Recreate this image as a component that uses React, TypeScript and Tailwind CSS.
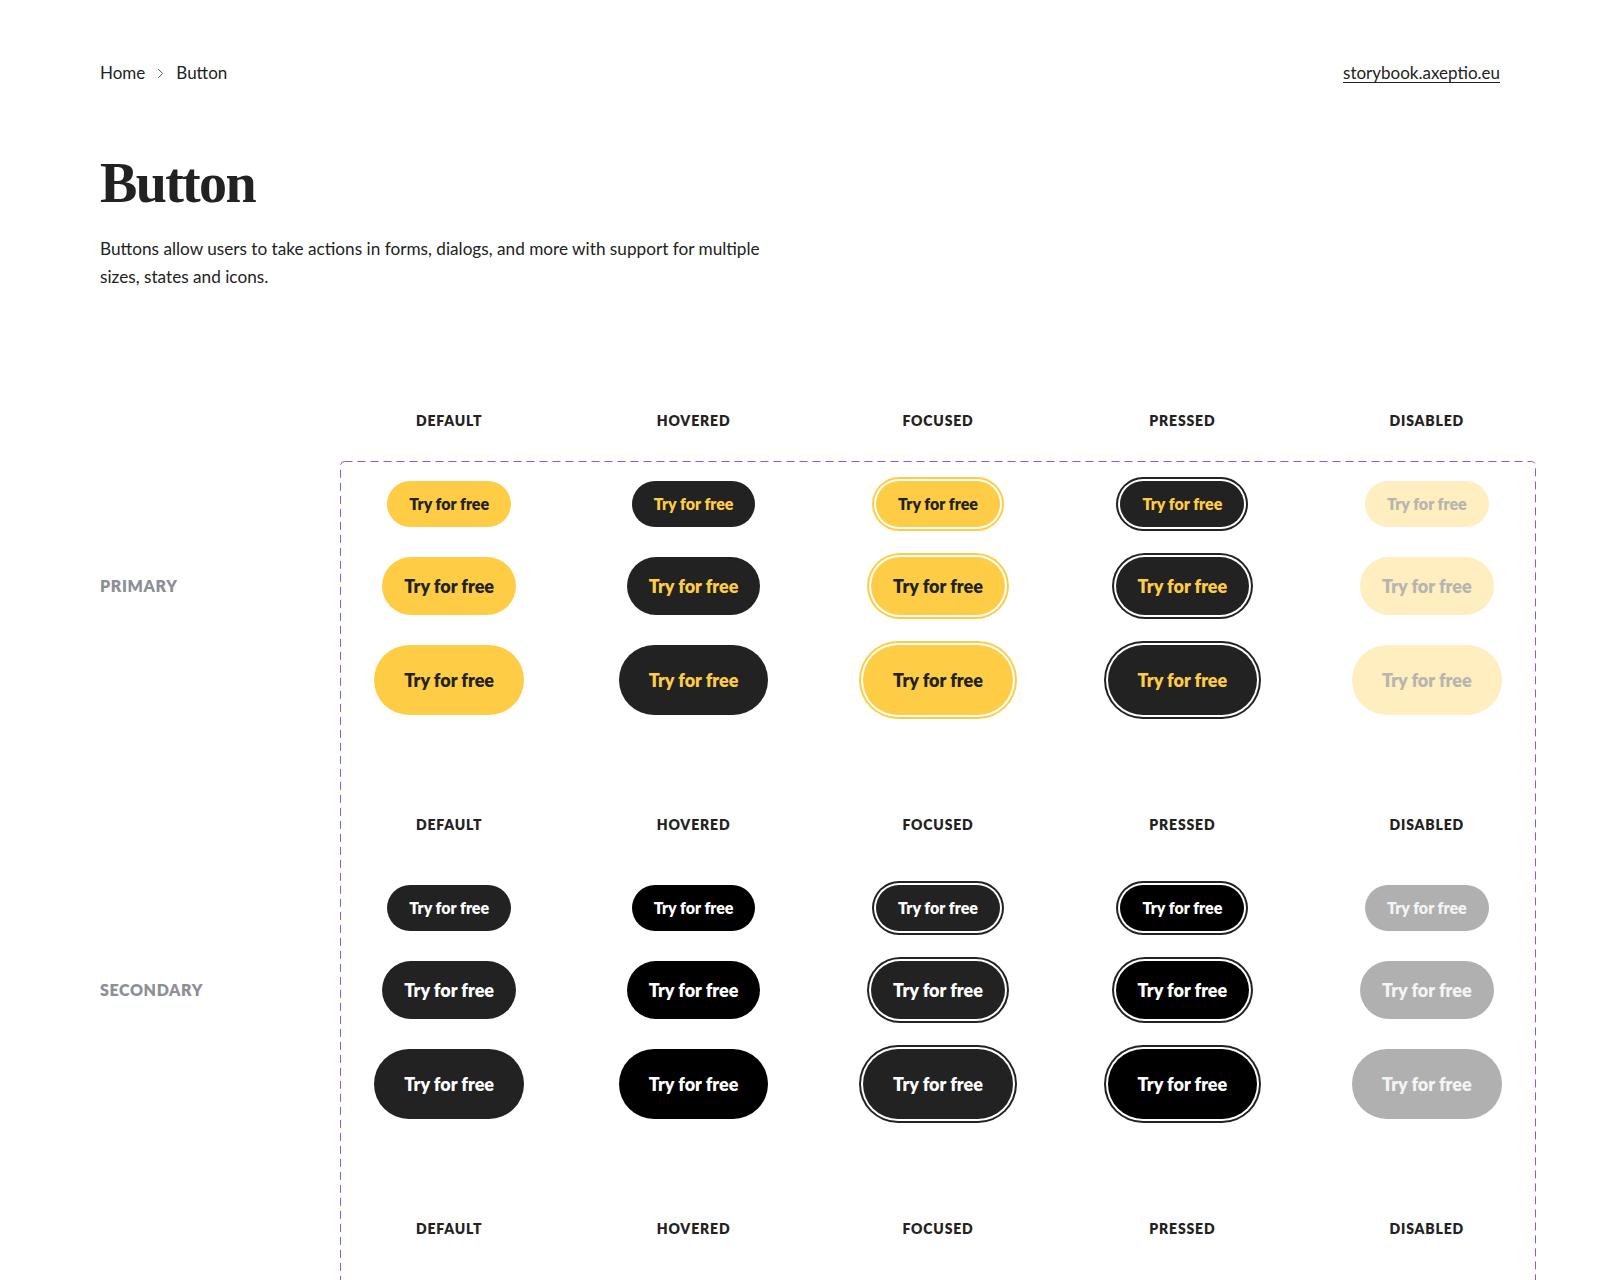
import { ChevronRight } from "lucide-react";

const STATES = ["Default", "Hovered", "Focused", "Pressed", "Disabled"];

const SIZES = [
  { row: "h-[46px]", btn: "h-[46px] px-[22px] text-[16px]" },
  { row: "h-[58px]", btn: "h-[58px] px-[22px] text-[18px]" },
  { row: "h-[70px]", btn: "h-[70px] px-[30px] text-[18px]" },
];

const VARIANTS = [
  {
    name: "Primary",
    states: [
      "bg-[#ffcd45] text-[#222]",
      "bg-[#222] text-[#ffcd45]",
      "bg-[#ffcd45] text-[#222] ring-2 ring-[#ffcd45] ring-offset-2",
      "bg-[#222] text-[#ffcd45] ring-2 ring-[#222] ring-offset-2",
      "bg-[#ffeebf] text-[#b7b5b0]",
    ],
  },
  {
    name: "Secondary",
    states: [
      "bg-[#222] text-white",
      "bg-black text-white",
      "bg-[#222] text-white ring-2 ring-[#222] ring-offset-2",
      "bg-black text-white ring-2 ring-[#222] ring-offset-2",
      "bg-[#b0b0b0] text-[#f4f4f4]",
    ],
  },
];

function StateHeaders() {
  return (
    <div className="grid h-5 grid-cols-5 items-center gap-x-[66px] px-5">
      {STATES.map((s) => (
        <div
          key={s}
          className="text-center text-[14px] font-extrabold uppercase leading-5 tracking-[0.06em] text-[#222]"
        >
          {s}
        </div>
      ))}
    </div>
  );
}

function ButtonRows({ states }: { states: string[] }) {
  return (
    <div className="flex flex-col gap-[30px]">
      {SIZES.map((size, i) => (
        <div
          key={i}
          className={`grid grid-cols-5 items-center justify-items-center gap-x-[66px] px-5 ${size.row}`}
        >
          {states.map((st, j) => (
            <button
              key={j}
              className={`flex items-center justify-center whitespace-nowrap rounded-full font-extrabold leading-none ${size.btn} ${st}`}
            >
              Try for free
            </button>
          ))}
        </div>
      ))}
    </div>
  );
}

function LabelRows({ name }: { name: string }) {
  return (
    <div className="flex flex-col gap-[30px]">
      {SIZES.map((size, i) => (
        <div key={i} className={`flex items-center ${size.row}`}>
          {i === 1 && (
            <span className="text-[16px] font-extrabold uppercase tracking-[0.04em] text-[#8c8f96]">
              {name}
            </span>
          )}
        </div>
      ))}
    </div>
  );
}

export default function App() {
  return (
    <div className="min-h-screen bg-white font-['Lato',sans-serif] text-[#222]">
      <div className="px-[100px] pt-[61px]">
        <nav className="flex h-6 items-center justify-between text-[17px] leading-6">
          <div className="flex items-center gap-[7px]">
            <a href="#">Home</a>
            <ChevronRight size={17} strokeWidth={1.4} className="text-[#555]" />
            <span>Button</span>
          </div>
          <a href="#" className="underline underline-offset-[3px]">
            storybook.axeptio.eu
          </a>
        </nav>

        <h1 className="mt-[70px] font-['Liberation_Serif',serif] text-[56px] font-bold leading-[56px] tracking-[-0.03em] text-[#222]">
          Button
        </h1>
        <p className="mt-6 max-w-[680px] text-[17.2px] leading-[28px]">
          Buttons allow users to take actions in forms, dialogs, and more with support for multiple
          sizes, states and icons.
        </p>

        <div className="ml-[240px] mt-[120px] w-[1196px]">
          <StateHeaders />
        </div>

        <div className="mt-[30px] flex items-start">
          <div className="w-[240px] shrink-0 pt-5">
            {VARIANTS.map((v, i) => (
              <div key={v.name} className={i > 0 ? "mt-[100px]" : ""}>
                {i > 0 && <div className="mb-[50px] h-5" />}
                <LabelRows name={v.name} />
              </div>
            ))}
          </div>

          <div className="relative w-[1196px] shrink-0 pt-5 pb-[120px]">
            <svg className="pointer-events-none absolute inset-0 h-full w-full overflow-visible">
              <rect
                x="0.5"
                y="0.5"
                width="1195"
                height="100%"
                rx="4"
                fill="none"
                stroke="#9152f4"
                strokeWidth="1"
                strokeDasharray="8 5"
              />
            </svg>
            {VARIANTS.map((v, i) => (
              <div key={v.name} className={i > 0 ? "mt-[100px]" : ""}>
                {i > 0 && (
                  <div className="mb-[50px]">
                    <StateHeaders />
                  </div>
                )}
                <ButtonRows states={v.states} />
              </div>
            ))}
            <div className="mt-[100px]">
              <StateHeaders />
            </div>
          </div>
        </div>
      </div>
    </div>
  );
}
